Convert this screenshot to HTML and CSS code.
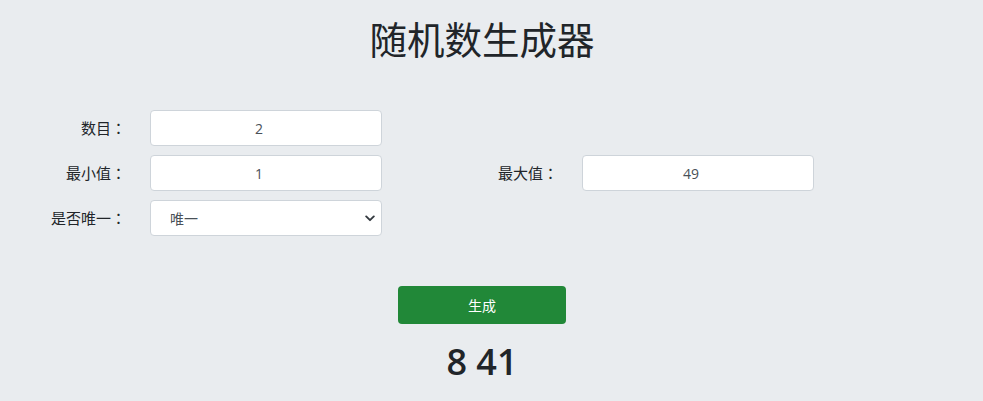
FILE: index.html
```html
<!DOCTYPE html>
<html lang="zh-CN">
<head>
<meta charset="utf-8">
<title>随机数生成器</title>
<link rel="stylesheet" href="styles.css">
</head>
<body>
<main class="page">
  <h1 class="title">随机数生成器</h1>
  <form class="form-grid">
    <label class="label">数目<span class="colon" lang="zh-TW">：</span></label>
    <input class="field" type="text" value="2">
    <span class="spacer"></span>
    <span class="spacer"></span>

    <label class="label">最小值<span class="colon" lang="zh-TW">：</span></label>
    <input class="field" type="text" value="1">
    <label class="label">最大值<span class="colon" lang="zh-TW">：</span></label>
    <input class="field" type="text" value="49">

    <label class="label">是否唯一<span class="colon" lang="zh-TW">：</span></label>
    <div class="select-wrap">
      <select class="field select">
        <option>唯一</option>
        <option>不唯一</option>
      </select>
      <svg class="chevron" width="10" height="7" viewBox="0 0 10 7"><path d="M1.2 1.4 L5 5.2 L8.8 1.4" fill="none" stroke="#343a40" stroke-width="1.9" stroke-linecap="round" stroke-linejoin="round"/></svg>
    </div>
  </form>
  <div class="actions">
    <button class="btn" type="button">生成</button>
  </div>
  <div class="result">8 41</div>
</main>
</body>
</html>
```

FILE: styles.css
```css
html, body {
  margin: 0;
  padding: 0;
  background: #e9ecef;
}
body {
  font-family: "Open Sans", "Noto Sans CJK SC", sans-serif;
  color: #212529;
}
.page {
  width: 964px;
  padding-top: 14px;
}
.title {
  margin: 0;
  text-align: center;
  font-size: 37.5px;
  font-weight: 400;
  line-height: 52px;
}
.form-grid {
  display: grid;
  grid-template-columns: 126px 232px 152px 232px;
  column-gap: 24px;
  row-gap: 9px;
  grid-auto-rows: 36px;
  margin-top: 44px;
}
.label {
  font-size: 15px;
  text-align: right;
  align-self: center;
  line-height: 20px;
}
.colon {
  font-family: "Noto Sans CJK TC", "Noto Sans CJK JP", sans-serif;
}
.field {
  box-sizing: border-box;
  width: 232px;
  height: 36px;
  margin: 0;
  padding: 0 14px 0 0;
  border: 1px solid #ced4da;
  border-radius: 4px;
  background: #fff;
  color: #495057;
  font-family: "Open Sans", "Noto Sans CJK SC", sans-serif;
  font-size: 14px;
  text-align: center;
  outline: none;
}
.select-wrap {
  position: relative;
  width: 232px;
  height: 36px;
}
.select {
  appearance: none;
  -webkit-appearance: none;
  text-align: left;
  padding: 0 30px 0 19px;
}
.chevron {
  position: absolute;
  right: 7px;
  top: 15px;
  pointer-events: none;
}
.actions {
  display: flex;
  justify-content: center;
  margin-top: 50px;
}
.btn {
  width: 168px;
  height: 38px;
  border: none;
  border-radius: 4px;
  background: #218838;
  color: #fff;
  font-family: "Open Sans", "Noto Sans CJK SC", sans-serif;
  font-size: 14px;
}
.result {
  margin-top: 15px;
  text-align: center;
  font-size: 36px;
  font-weight: 600;
  line-height: 46px;
}
```
